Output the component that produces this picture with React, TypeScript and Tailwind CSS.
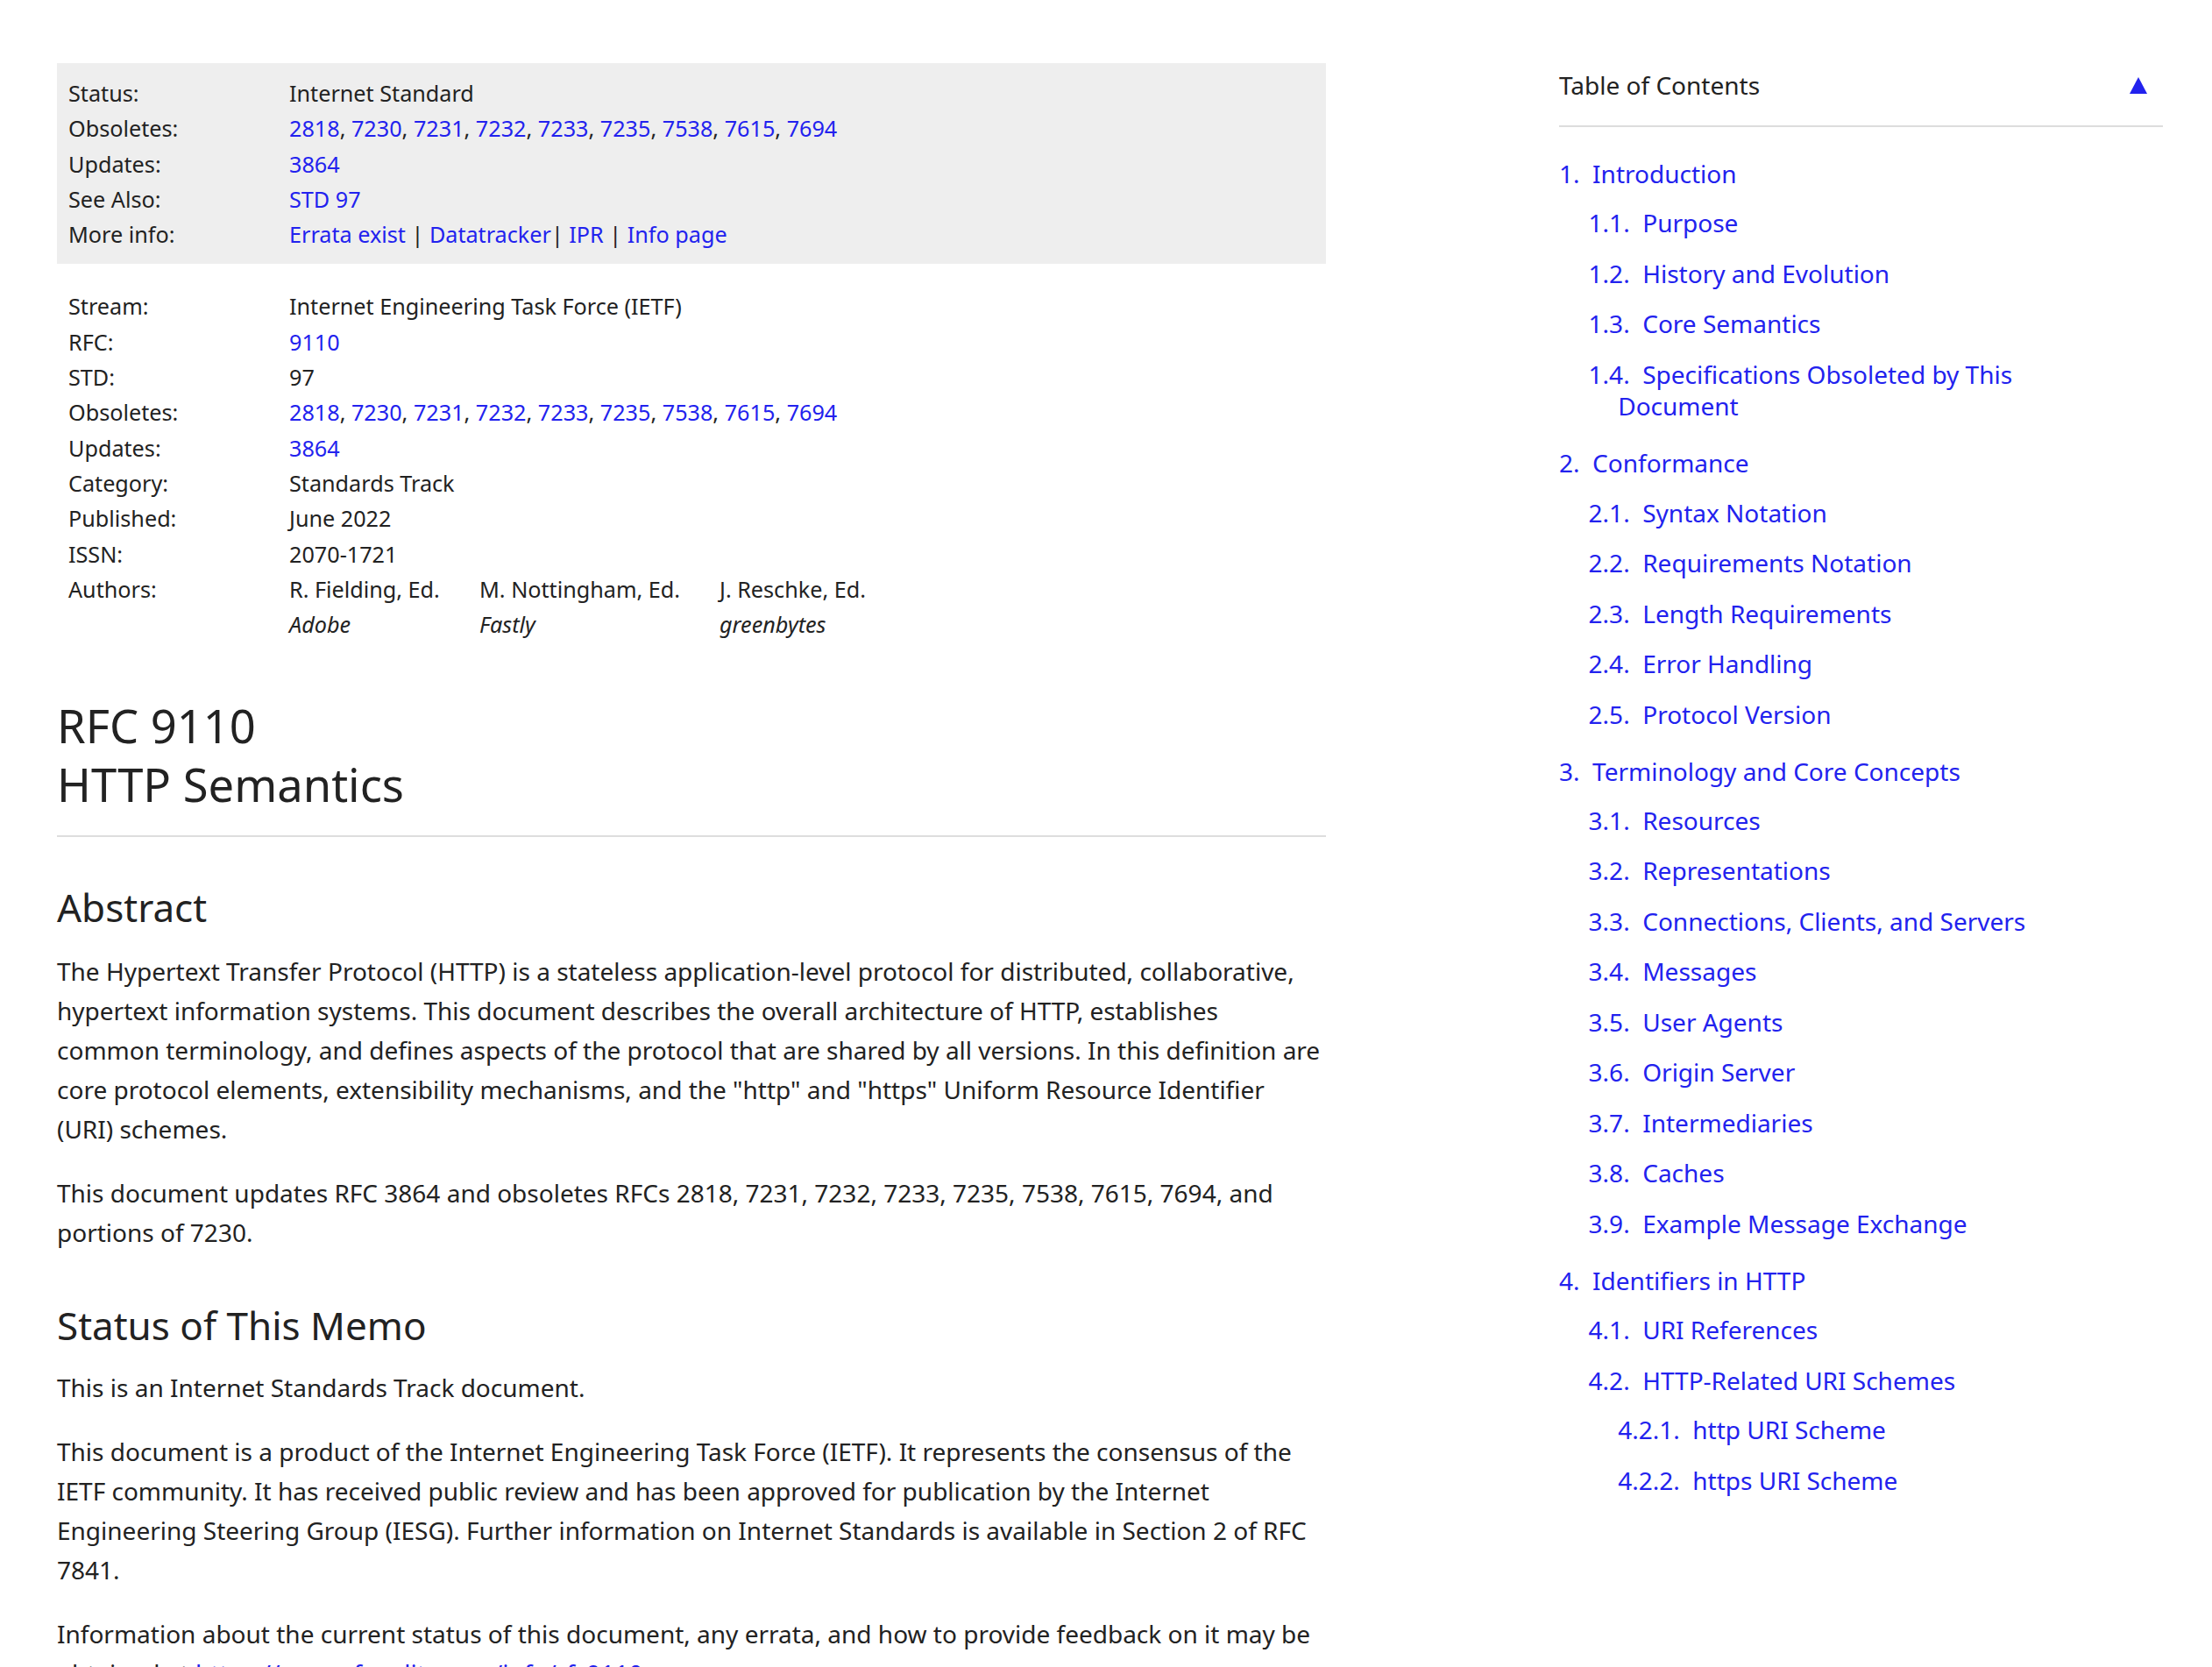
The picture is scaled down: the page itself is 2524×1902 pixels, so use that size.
import React from "react";

const L = ({ children }: { children: React.ReactNode }) => (
  <a className="text-[#22e] no-underline">{children}</a>
);

const obs = ["2818", "7230", "7231", "7232", "7233", "7235", "7538", "7615", "7694"];

const ObsList = () => (
  <>
    {obs.map((n, i) => (
      <React.Fragment key={n}>
        <L>{n}</L>
        {i < obs.length - 1 ? ", " : ""}
      </React.Fragment>
    ))}
  </>
);

const Row = ({ label, children }: { label: string; children: React.ReactNode }) => (
  <div className="flex">
    <div className="w-[252px] shrink-0">{label}</div>
    <div>{children}</div>
  </div>
);

type Toc = { num: string; title: string; children?: Toc[] };

const toc: Toc[] = [
  {
    num: "1.",
    title: "Introduction",
    children: [
      { num: "1.1.", title: "Purpose" },
      { num: "1.2.", title: "History and Evolution" },
      { num: "1.3.", title: "Core Semantics" },
      { num: "1.4.", title: "Specifications Obsoleted by This Document" },
    ],
  },
  {
    num: "2.",
    title: "Conformance",
    children: [
      { num: "2.1.", title: "Syntax Notation" },
      { num: "2.2.", title: "Requirements Notation" },
      { num: "2.3.", title: "Length Requirements" },
      { num: "2.4.", title: "Error Handling" },
      { num: "2.5.", title: "Protocol Version" },
    ],
  },
  {
    num: "3.",
    title: "Terminology and Core Concepts",
    children: [
      { num: "3.1.", title: "Resources" },
      { num: "3.2.", title: "Representations" },
      { num: "3.3.", title: "Connections, Clients, and Servers" },
      { num: "3.4.", title: "Messages" },
      { num: "3.5.", title: "User Agents" },
      { num: "3.6.", title: "Origin Server" },
      { num: "3.7.", title: "Intermediaries" },
      { num: "3.8.", title: "Caches" },
      { num: "3.9.", title: "Example Message Exchange" },
    ],
  },
  {
    num: "4.",
    title: "Identifiers in HTTP",
    children: [
      { num: "4.1.", title: "URI References" },
      {
        num: "4.2.",
        title: "HTTP-Related URI Schemes",
        children: [
          { num: "4.2.1.", title: "http URI Scheme" },
          { num: "4.2.2.", title: "https URI Scheme" },
        ],
      },
    ],
  },
];

const TocItem = ({ item }: { item: Toc }) => (
  <li className="pl-[33.6px]">
    <div className="indent-[-33.6px] leading-[36.4px]">
      <L>{item.num}</L>
      {"\u00a0\u00a0"}
      <L>{item.title}</L>
    </div>
    {item.children && (
      <ul className="mt-[20px] flex flex-col gap-[21.1px]">
        {item.children.map((c) => (
          <TocItem key={c.num} item={c} />
        ))}
      </ul>
    )}
  </li>
);

export default function App() {
  return (
    <div className="h-[1902px] overflow-hidden bg-white font-['Noto_Sans',sans-serif] text-[#222]">
      <div className="flex">
        {/* Main column */}
        <main className="ml-[65px] w-[1448px] shrink-0">
          <div className="mt-[72px] bg-[#eee] py-[14px] pl-[13px] text-[25.2px] leading-[40.3px]">
            <Row label="Status:">Internet Standard</Row>
            <Row label="Obsoletes:">
              <ObsList />
            </Row>
            <Row label="Updates:">
              <L>3864</L>
            </Row>
            <Row label="See Also:">
              <L>STD 97</L>
            </Row>
            <Row label="More info:">
              <L>Errata exist</L> | <L>Datatracker</L>| <L>IPR</L> | <L>Info page</L>
            </Row>
          </div>

          <div className="mt-[28px] pl-[13px] text-[25.2px] leading-[40.3px]">
            <Row label="Stream:">Internet Engineering Task Force (IETF)</Row>
            <Row label="RFC:">
              <L>9110</L>
            </Row>
            <Row label="STD:">97</Row>
            <Row label="Obsoletes:">
              <ObsList />
            </Row>
            <Row label="Updates:">
              <L>3864</L>
            </Row>
            <Row label="Category:">Standards Track</Row>
            <Row label="Published:">June 2022</Row>
            <Row label="ISSN:">2070-1721</Row>
            <Row label="Authors:">
              <div className="flex">
                <div className="w-[217px]">
                  <div>R. Fielding, Ed.</div>
                  <div className="italic">Adobe</div>
                </div>
                <div className="w-[274px]">
                  <div>M. Nottingham, Ed.</div>
                  <div className="italic">Fastly</div>
                </div>
                <div>
                  <div>J. Reschke, Ed.</div>
                  <div className="italic">greenbytes</div>
                </div>
              </div>
            </Row>
          </div>

          <h1 className="mt-[62px] text-[52.5px] leading-[67px] font-normal">
            <div>RFC 9110</div>
            <div>HTTP Semantics</div>
          </h1>
          <div className="mt-[25px] h-[2px] bg-[#ddd]" />

          <h2 className="mt-[54px] text-[44px] leading-[53px] font-normal">Abstract</h2>
          <p className="mt-[24px] text-[28px] leading-[45px]">
            The Hypertext Transfer Protocol (HTTP) is a stateless application-level protocol for
            distributed, collaborative, hypertext information systems. This document describes the
            overall architecture of HTTP, establishes common terminology, and defines aspects of the
            protocol that are shared by all versions. In this definition are core protocol elements,
            extensibility mechanisms, and the "http" and "https" Uniform Resource Identifier (URI)
            schemes.
          </p>
          <p className="mt-[28px] text-[28px] leading-[45px]">
            This document updates RFC 3864 and obsoletes RFCs 2818, 7231, 7232, 7233, 7235, 7538,
            7615, 7694, and portions of 7230.
          </p>

          <h2 className="mt-[57px] text-[44px] leading-[53px] font-normal">Status of This Memo</h2>
          <p className="mt-[22px] text-[28px] leading-[45px]">
            This is an Internet Standards Track document.
          </p>
          <p className="mt-[28px] text-[28px] leading-[45px]">
            This document is a product of the Internet Engineering Task Force (IETF). It represents the
            consensus of the IETF community. It has received public review and has been approved for
            publication by the Internet Engineering Steering Group (IESG). Further information on
            Internet Standards is available in Section 2 of RFC 7841.
          </p>
          <p className="mt-[28px] text-[28px] leading-[45px]">
            Information about the current status of this document, any errata, and how to provide
            feedback on it may be obtained at <L>https://www.rfc-editor.org/info/rfc9110</L>.
          </p>
        </main>

        {/* Table of contents */}
        <nav className="ml-auto mr-[56px] w-[689px] shrink-0 text-[28px]">
          <div className="mt-[75px] flex items-center justify-between leading-[45px]">
            <span>Table of Contents</span>
            <a className="mr-[18px] flex items-center">
              <svg width="20" height="19" viewBox="0 0 20 19">
                <polygon points="10,0 20,19 0,19" fill="#22e" />
              </svg>
            </a>
          </div>
          <div className="mt-[23px] h-[2px] bg-[#ddd]" />
          <ul className="mt-[35px] flex flex-col gap-[28.5px] pr-[60px]">
            {toc.map((t) => (
              <TocItem key={t.num} item={t} />
            ))}
          </ul>
        </nav>
      </div>
    </div>
  );
}
